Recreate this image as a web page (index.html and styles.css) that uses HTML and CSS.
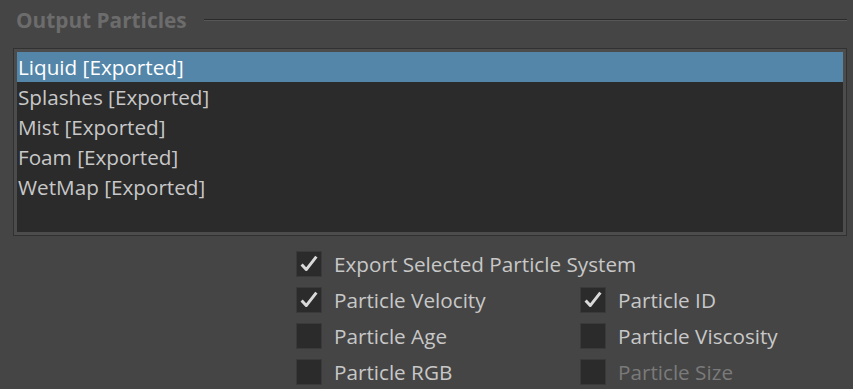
FILE: index.html
```html
<!DOCTYPE html>
<html>
<head>
  <meta charset="UTF-8">
  <title>Output Particles</title>
  <link rel="stylesheet" href="styles.css">
</head>
<body>
<div class="panel">
    <div class="group-head">
        <span class="group-title">Output Particles</span>
        <span class="group-rule"></span>
    </div>
    <div class="listbox">
        <div class="item selected">Liquid [Exported]</div>
        <div class="item">Splashes [Exported]</div>
        <div class="item">Mist [Exported]</div>
        <div class="item">Foam [Exported]</div>
        <div class="item">WetMap [Exported]</div>
    </div>
    <div class="options">
        <label class="opt wide"><span class="box checked"><svg viewBox="0 0 26 26"><path d="M5 13.5 L10 19 L21 5"/></svg></span>Export Selected Particle System</label>
        <label class="opt"><span class="box checked"><svg viewBox="0 0 26 26"><path d="M5 13.5 L10 19 L21 5"/></svg></span>Particle Velocity</label>
        <label class="opt"><span class="box checked"><svg viewBox="0 0 26 26"><path d="M5 13.5 L10 19 L21 5"/></svg></span>Particle ID</label>
        <label class="opt"><span class="box"></span>Particle Age</label>
        <label class="opt"><span class="box"></span>Particle Viscosity</label>
        <label class="opt"><span class="box"></span>Particle RGB</label>
        <label class="opt disabled"><span class="box"></span>Particle Size</label>
    </div>
</div>
</body>
</html>
```

FILE: styles.css
```css
* {
    margin: 0;
    padding: 0;
    box-sizing: border-box;
}
body {
    background-color: #454545;
    font-family: "Open Sans", "Noto Sans", sans-serif;
    color: #c8c8c8;
    overflow: hidden;
}
.panel {
    width: 853px;
    height: 389px;
    padding: 6px 6px 0 13px;
}
.group-head {
    display: flex;
    align-items: center;
    height: 28px;
    padding-left: 3px;
}
.group-title {
    font-weight: bold;
    font-size: 20.8px;
    color: #6c6c6c;
    margin-right: 17px;
}
.group-rule {
    flex: 1;
    height: 2px;
    border-top: 1px solid #2a2a2a;
    border-bottom: 1px solid #575757;
    margin-top: -1px;
}
.listbox {
    margin-top: 14px;
    width: 834px;
    height: 188px;
    border: 1px solid #313131;
    padding: 3px;
    background-color: #4c4c4c;
}
.listbox .item {
    height: 30px;
    line-height: 30px;
    padding-left: 1px;
    font-size: 20.7px;
    background-color: #2b2b2b;
    color: #c8c8c8;
}
.listbox .item.selected {
    background-color: #5386a9;
    color: #ffffff;
}
.listbox::after {
    content: "";
    display: block;
    height: 30px;
    background-color: #2b2b2b;
}
.options {
    display: grid;
    grid-template-columns: 284px 1fr;
    row-gap: 10px;
    margin-top: 15px;
    margin-left: 283px;
}
.opt {
    display: flex;
    align-items: center;
    height: 26px;
    font-size: 20.7px;
}
.opt.wide {
    grid-column: 1 / 3;
}
.opt.disabled {
    color: #7a7a7a;
}
.box {
    width: 26px;
    height: 26px;
    background-color: #2b2b2b;
    border: 1px solid #3a3a3a;
    margin-right: 12px;
    flex: none;
}
.box svg {
    display: block;
    width: 24px;
    height: 24px;
}
.box path {
    fill: none;
    stroke: #d9d9d9;
    stroke-width: 3.2;
    stroke-linejoin: round;
}
```
